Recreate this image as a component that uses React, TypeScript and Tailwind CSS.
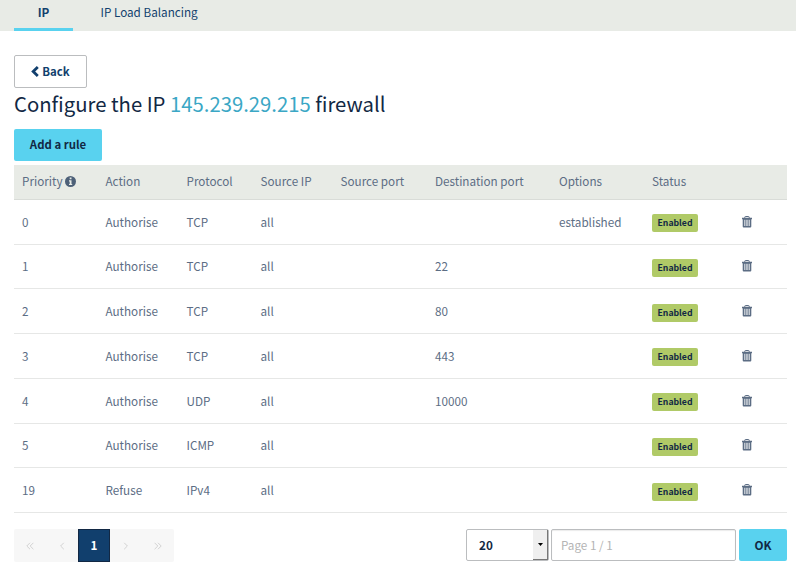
import React from "react";

const columns =
  "grid grid-cols-[83.5px_81px_74px_80px_94.5px_124px_93px_90px_1fr] items-center pl-2";

const rules = [
  { priority: "0", action: "Authorise", protocol: "TCP", port: "", options: "established" },
  { priority: "1", action: "Authorise", protocol: "TCP", port: "22", options: "" },
  { priority: "2", action: "Authorise", protocol: "TCP", port: "80", options: "" },
  { priority: "3", action: "Authorise", protocol: "TCP", port: "443", options: "" },
  { priority: "4", action: "Authorise", protocol: "UDP", port: "10000", options: "" },
  { priority: "5", action: "Authorise", protocol: "ICMP", port: "", options: "" },
  { priority: "19", action: "Refuse", protocol: "IPv4", port: "", options: "" },
];

function TrashIcon() {
  return (
    <svg width="10" height="12" viewBox="0 0 10 12">
      <path d="M2.8 2V1.2Q2.8 .5 3.5 .5H6.5Q7.2 .5 7.2 1.2V2" fill="none" stroke="#5c6d84" />
      <path d="M0 1.8H10V3.2H9.3V10.6Q9.3 11.6 8.3 11.6H1.7Q.7 11.6 .7 10.6V3.2H0Z" fill="#5c6d84" />
      <path d="M2.7 3.8V10M4.25 3.8V10M5.8 3.8V10M7.35 3.8V10" fill="none" stroke="#fff" strokeWidth=".75" />
    </svg>
  );
}

function InfoIcon() {
  return (
    <svg width="11" height="11" viewBox="0 0 11 11">
      <circle cx="5.5" cy="5.5" r="5.5" fill="#4d6078" />
      <path d="M4.7 1.6H6.5V3.2H4.7ZM4 4.2H6.5V7.9H7.2V9.1H4V7.9H4.7V5.4H4Z" fill="#e8ebe6" />
    </svg>
  );
}

function Chevron({ double = false, flip = false }: { double?: boolean; flip?: boolean }) {
  return (
    <span className="flex h-full w-8 items-center justify-center">
      <svg
        width="8"
        height="8"
        viewBox="0 0 8 8"
        fill="none"
        stroke="#d2d2d2"
        className={flip ? "rotate-180" : ""}
      >
        {double ? <path d="M4 .8L.8 4L4 7.2M7.4 .8L4.2 4L7.4 7.2" /> : <path d="M5.8 .8L2.6 4L5.8 7.2" />}
      </svg>
    </span>
  );
}

export default function App() {
  return (
    <div className="h-[573px] w-[796px] overflow-hidden bg-white font-['Noto_Sans_CJK_SC',sans-serif] text-[11.7px] leading-5 text-[#5c6d84]">
      <nav className="flex h-[31px] bg-[#e8ebe6] pl-[14px] text-[#113f6d]">
        <a className="h-[31px] w-[59px] border-b-[3px] border-[#59d2ef] pt-[2px] text-center font-bold">IP</a>
        <a className="ml-[27.5px] pt-[2px]">IP Load Balancing</a>
      </nav>
      <main className="pt-6 pr-[9px] pl-[14px]">
        <button className="flex h-[33px] w-[73px] items-center justify-center gap-[3px] rounded-[2px] border border-[#bbbdbf] pb-px text-[11.4px] font-bold text-[#113f6d]">
          <svg width="8" height="11" viewBox="0 0 8 11" fill="none" stroke="#113f6d" strokeWidth="2.8">
            <path d="M6.8 1L2.2 5.5L6.8 10" />
          </svg>
          Back
        </button>
        <h1 className="h-[41px] text-[20.3px] leading-[30px] text-[#122844]">
          Configure the IP <span className="text-[#3ba7c5]">145.239.29.215</span> firewall
        </h1>
        <button className="block h-8 w-[88px] rounded-[2px] bg-[#59d2ef] pb-[2px] text-[11.4px] font-bold text-[#122844]">
          Add a rule
        </button>
        <section className="mt-1">
          <div className={`${columns} h-[34.75px] border-b border-[#d9dcd8] bg-[#e8ebe6] pb-px`}>
            <span className="flex items-center gap-[3px]">
              Priority <InfoIcon />
            </span>
            <span>Action</span>
            <span>Protocol</span>
            <span>Source IP</span>
            <span>Source port</span>
            <span>Destination port</span>
            <span>Options</span>
            <span>Status</span>
          </div>
          {rules.map((rule) => (
            <div key={rule.priority} className={`${columns} h-[44.75px] border-b border-[#e6e7e6]`}>
              <span>{rule.priority}</span>
              <span>{rule.action}</span>
              <span>{rule.protocol}</span>
              <span>all</span>
              <span />
              <span>{rule.port}</span>
              <span>{rule.options}</span>
              <span className="mt-[2.9px] h-[18px] w-[46px] rounded-[2px] bg-[#b0ca67] text-center text-[8.7px] leading-[18px] font-bold text-[#122844]">
                Enabled
              </span>
              <TrashIcon />
            </div>
          ))}
        </section>
        <footer className="mt-4 flex h-[33px] items-start justify-between">
          <div className="flex h-[33px] rounded-[2px] bg-[#f7f7f7]">
            <Chevron double />
            <Chevron />
            <span className="h-[33px] w-8 border border-[#122844] bg-[#113f6d] text-center leading-[30px] font-bold text-white">
              1
            </span>
            <Chevron flip />
            <Chevron double flip />
          </div>
          <div className="flex h-8">
            <div className="flex w-[83px] items-center justify-between rounded-[2px] border border-[#bbbdbf] pl-3 font-bold text-[#122844]">
              20
              <span className="flex h-[30px] w-[15px] items-center justify-center border-r border-b border-[#777] bg-[#efefef]">
                <svg width="5" height="3" viewBox="0 0 5 3">
                  <path d="M0 0H5L2.5 3Z" fill="#000" />
                </svg>
              </span>
            </div>
            <div className="ml-[2px] w-[185px] rounded-[2px] border border-[#bbbdbf] pl-[9px] leading-[29px] text-[#b4b4b4] shadow-[inset_0_1px_1px_#00000015]">
              Page 1 / 1
            </div>
            <button className="ml-[3px] w-12 rounded-[2px] bg-[#59d2ef] font-bold text-[#122844]">OK</button>
          </div>
        </footer>
      </main>
    </div>
  );
}
